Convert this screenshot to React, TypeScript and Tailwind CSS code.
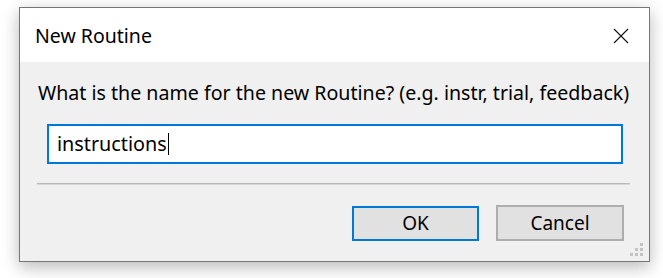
export default function App() {
  const font = { fontFamily: '"Noto Sans", "Open Sans", Arial, sans-serif' };
  return (
    <div className="w-[663px] h-[278px] bg-white overflow-hidden pl-[19px] pt-[7px]" style={font}>
      <div className="relative w-[631px] h-[255px] border border-[#767676] bg-[#f0f0f0] shadow-[0_5px_16px_rgba(0,0,0,0.28)] flex flex-col">
        <div className="h-[54px] bg-white flex items-center justify-between pl-[15px] pr-[20px] shrink-0">
          <span className="text-[19.5px] text-black leading-none mt-[1px]">New Routine</span>
          <svg width="16" height="16" viewBox="0 0 16 16" className="mt-[1px]">
            <path d="M1 1 L15 15 M15 1 L1 15" stroke="#111" strokeWidth="1.1" fill="none" />
          </svg>
        </div>
        <div className="pl-[18px] pt-[19px] text-[19.6px] leading-[24px] text-black whitespace-nowrap">
          What is the name for the new Routine? (e.g. instr, trial, feedback)
        </div>
        <div className="ml-[27px] mt-[19px] w-[576px] h-[40px] bg-white border-2 border-[#0078d7] flex items-center pl-[8px] text-[19.8px] text-black">
          <span>instructions</span>
          <span className="inline-block w-[1.5px] h-[22px] bg-black ml-[1px]" />
        </div>
        <div className="ml-[17px] mt-[19px] w-[593px] h-[2px] bg-[#b9b9b9] border-b border-[#d8d8d8]" />
        <div className="flex justify-end mt-[20px] pr-[25px] gap-[17px]">
          <div className="w-[127px] h-[35px] mt-[1px] bg-[#e1e1e1] border-2 border-[#0078d7] flex items-center justify-center text-[19px] text-black">
            OK
          </div>
          <div className="w-[128px] h-[36px] bg-[#e1e1e1] border-2 border-[#adadad] flex items-center justify-center text-[19px] text-black">
            Cancel
          </div>
        </div>
        <div className="absolute right-[5px] bottom-[4px] w-[14px] h-[14px]">
          <svg width="14" height="14" viewBox="0 0 14 14">
            <rect x="10" y="0" width="3" height="3" fill="#c2c2c2" />
            <rect x="5" y="5" width="3" height="3" fill="#c2c2c2" />
            <rect x="10" y="5" width="3" height="3" fill="#c2c2c2" />
            <rect x="0" y="10" width="3" height="3" fill="#c2c2c2" />
            <rect x="5" y="10" width="3" height="3" fill="#c2c2c2" />
            <rect x="10" y="10" width="3" height="3" fill="#c2c2c2" />
          </svg>
        </div>
      </div>
    </div>
  );
}
